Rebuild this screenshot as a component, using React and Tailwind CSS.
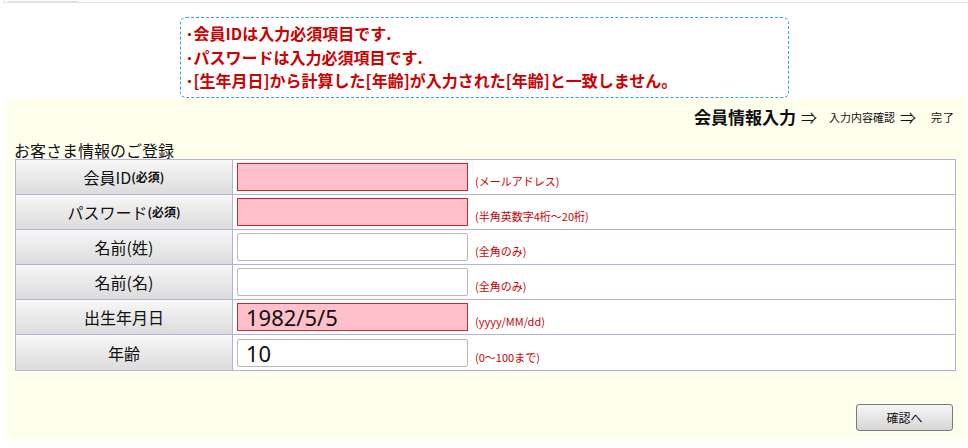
import React from "react";

const jp = "font-['Noto_Sans_CJK_JP','Noto_Sans_CJK_SC',sans-serif]";

function Row({ label, small, error, value, hint, last }) {
  return (
    <div className={`flex h-[35px] ${last ? "" : "border-b"} border-[#b4b4d2]`}>
      <div className="w-[217px] shrink-0 border-r border-[#b4b4d2] bg-gradient-to-b from-[#f7f7f7] to-[#dcdcdc] flex items-center justify-center text-[16px] leading-[18px] text-[#111]">
        <span>{label}</span>
        {small && <span className="text-[12px] font-bold">{small}</span>}
      </div>
      <div className="flex-1 bg-white flex items-end pl-[4px] pb-[3px]">
        <div
          className={`w-[231px] h-[28px] border flex items-center pl-[8px] text-[22px] font-['Noto_Sans',sans-serif] text-[#111] ${
            error
              ? "bg-[#ffc0cb] border-[#cc2a2a]"
              : "bg-white border-[#b8b8b8] rounded-[2px]"
          }`}
        >
          {value}
        </div>
        <span className="ml-[7px] mb-[3px] text-[11px] leading-[13px] text-[#cc0000]">{hint}</span>
      </div>
    </div>
  );
}

export default function App() {
  return (
    <div className={`w-[968px] h-[448px] bg-white overflow-hidden ${jp}`}>
      <div className="ml-[3px] h-[3px] border-l border-b border-[#e6e6e6]">
        <div className="ml-[4px] w-[70px] h-[2px] border-b border-[#dddddd]" />
      </div>
      <div className="mx-auto mt-[14px] w-[609px] h-[81px] border border-dashed border-[#3aa0c8] rounded-[6px] pt-[4px] pl-[5px] text-[16px] leading-[23.5px] font-bold text-[#cc0000]">
        <div>･会員IDは入力必須項目です.</div>
        <div>･パスワードは入力必須項目です.</div>
        <div>･[生年月日]から計算した[年齢]が入力された[年齢]と一致しません。</div>
      </div>
      <div className="ml-[5px] w-[960px] h-[343px] bg-[#ffffee] flex flex-col">
        <div className="pt-[9px] pr-[10px] flex justify-end items-center h-[29px] text-[#111]">
          <span className="text-[17px] leading-[20px] font-bold">会員情報入力</span>
          <span className="ml-[5px] text-[16px] leading-[20px]">⇒</span>
          <span className="ml-[12px] text-[11px] leading-[20px]">入力内容確認</span>
          <span className="ml-[5px] text-[16px] leading-[20px]">⇒</span>
          <span className="ml-[15px] text-[11px] leading-[20px] tracking-[1px]">完了</span>
        </div>
        <div className="mt-[15px] ml-[9px] text-[16px] leading-[17px] text-[#111]">お客さま情報のご登録</div>
        <div className="ml-[10px] w-[941px] border border-[#b4b4d2]">
          <Row label="会員ID" small="(必須)" error hint="(メールアドレス)" />
          <Row label="パスワード" small="(必須)" error hint="(半角英数字4桁～20桁)" />
          <Row label="名前(姓)" hint="(全角のみ)" />
          <Row label="名前(名)" hint="(全角のみ)" />
          <Row label="出生年月日" error value="1982/5/5" hint="(yyyy/MM/dd)" />
          <Row label="年齢" value="10" hint="(0～100まで)" last />
        </div>
        <div className="flex justify-end mt-[33px] pr-[12px]">
          <button className="w-[97px] h-[27px] border border-[#7a7a7a] rounded-[3px] bg-gradient-to-b from-[#f6f6f6] to-[#d6d6d6] text-[12px] leading-[14px] text-[#111]">
            確認へ
          </button>
        </div>
      </div>
    </div>
  );
}
